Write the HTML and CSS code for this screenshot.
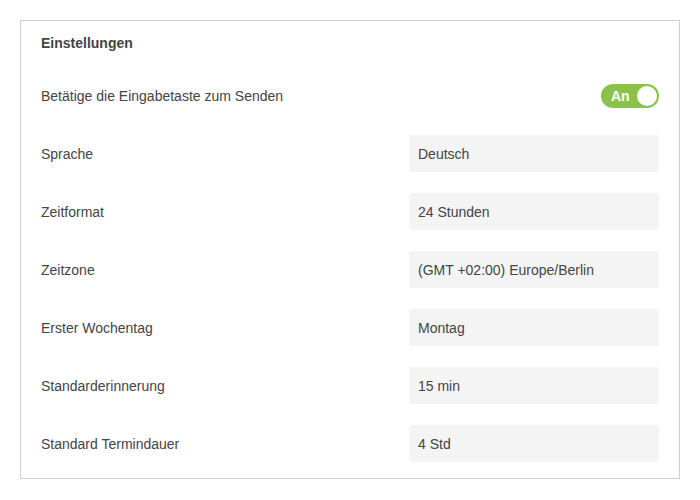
FILE: index.html
```html
<!DOCTYPE html>
<html lang="de">
<head>
<meta charset="utf-8">
<title>Einstellungen</title>
<link rel="stylesheet" href="styles.css">
</head>
<body>
<section class="card">
  <h2 class="title">Einstellungen</h2>
  <div class="rows">
    <div class="row">
      <span class="label">Betätige die Eingabetaste zum Senden</span>
      <div class="toggle"><span class="toggle-text">An</span><span class="knob"></span></div>
    </div>
    <div class="row">
      <span class="label">Sprache</span>
      <div class="field">Deutsch</div>
    </div>
    <div class="row">
      <span class="label">Zeitformat</span>
      <div class="field">24 Stunden</div>
    </div>
    <div class="row">
      <span class="label">Zeitzone</span>
      <div class="field">(GMT +02:00) Europe/Berlin</div>
    </div>
    <div class="row">
      <span class="label">Erster Wochentag</span>
      <div class="field">Montag</div>
    </div>
    <div class="row">
      <span class="label">Standarderinnerung</span>
      <div class="field">15 min</div>
    </div>
    <div class="row">
      <span class="label">Standard Termindauer</span>
      <div class="field">4 Std</div>
    </div>
  </div>
</section>
</body>
</html>
```
FILE: styles.css
```css
* { box-sizing: border-box; }
html, body { margin: 0; padding: 0; background: #fff; }
body {
  font-family: "Liberation Sans", Arial, sans-serif;
  font-size: 14px;
  color: #444;
  padding: 20px;
}
.card {
  width: 660px;
  border: 1px solid #cfcfcf;
  padding: 14px 20px 16px 20px;
}
.title {
  margin: 0;
  font-size: 14px;
  font-weight: bold;
  line-height: 16px;
  color: #444;
}
.rows {
  margin-top: 26px;
  display: flex;
  flex-direction: column;
  gap: 21px;
}
.row {
  display: flex;
  align-items: center;
  justify-content: space-between;
  height: 37px;
}
.label { color: #444; }
.field {
  width: 250px;
  height: 37px;
  background: #f4f4f4;
  border-radius: 3px;
  padding-left: 9px;
  display: flex;
  align-items: center;
  color: #444;
}
.toggle {
  width: 58px;
  height: 24px;
  border-radius: 12px;
  background: #8bc34a;
  display: flex;
  align-items: center;
  justify-content: space-between;
  padding: 0 2px 0 10px;
}
.toggle-text {
  color: #fff;
  font-weight: bold;
  font-size: 14px;
}
.knob {
  width: 20px;
  height: 20px;
  border-radius: 50%;
  background: #fff;
}
```
